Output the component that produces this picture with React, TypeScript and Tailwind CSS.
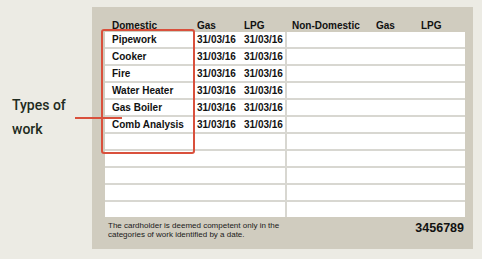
const ROWS = [
  { name: 'Pipework', gas: '31/03/16', lpg: '31/03/16' },
  { name: 'Cooker', gas: '31/03/16', lpg: '31/03/16' },
  { name: 'Fire', gas: '31/03/16', lpg: '31/03/16' },
  { name: 'Water Heater', gas: '31/03/16', lpg: '31/03/16' },
  { name: 'Gas Boiler', gas: '31/03/16', lpg: '31/03/16' },
  { name: 'Comb Analysis', gas: '31/03/16', lpg: '31/03/16' },
]

const TOTAL_ROWS = 11

export default function App() {
  const rows = Array.from({ length: TOTAL_ROWS }, (_, i) => ROWS[i])

  return (
    <div className="relative flex w-[482px] h-[259px] bg-[#ecebe4] font-['Liberation_Sans',Arial,sans-serif] text-[#111]">
      {/* Label */}
      <div className="w-[92px] pl-[12px] pt-[93px] font-['Roboto',sans-serif] font-medium text-[14px] leading-[24px] text-[#1f2b21]">
        <div>Types of</div>
        <div>work</div>
      </div>

      {/* Card */}
      <div className="mt-[7px] w-[381px] h-[242px] bg-[#d0ccbf] pt-[13px] pl-[13px] pr-[8px]">
        {/* Column headers */}
        <div className="flex h-[12px] text-[10px] leading-[12px] font-bold">
          <div className="flex w-[180px] pl-[7px]">
            <span className="w-[85px]">Domestic</span>
            <span className="w-[47px]">Gas</span>
            <span>LPG</span>
          </div>
          <div className="flex ml-[2px] pl-[5px]">
            <span className="w-[84px]">Non-Domestic</span>
            <span className="w-[45px]">Gas</span>
            <span>LPG</span>
          </div>
        </div>

        {/* Table */}
        <div className="flex gap-[2px] bg-[#d8d7d1]">
          <div className="flex flex-col gap-[2px] w-[180px]">
            {rows.map((r, i) => (
              <div key={i} className="flex h-[15px] bg-white pl-[7px] text-[10px] leading-[16px] font-bold">
                {r && (
                  <>
                    <span className="w-[85px]">{r.name}</span>
                    <span className="w-[47px]">{r.gas}</span>
                    <span>{r.lpg}</span>
                  </>
                )}
              </div>
            ))}
          </div>
          <div className="flex flex-col gap-[2px] w-[178px]">
            {rows.map((_, i) => (
              <div key={i} className="h-[15px] bg-white" />
            ))}
          </div>
        </div>

        {/* Footer */}
        <div className="flex justify-between pt-[4px] pl-[3px] pr-[1px]">
          <p className="text-[8px] leading-[9px] text-[#1a1a1a]">
            The cardholder is deemed competent only in the
            <br />
            categories of work identified by a date.
          </p>
          <span className="text-[12.5px] leading-[14px] font-bold">3456789</span>
        </div>
      </div>

      {/* Highlight overlay */}
      <div className="absolute left-[101px] top-[29px] w-[94px] h-[125px] border-2 border-[#d9503c] rounded-[3px]" />
      <div className="absolute left-[75px] top-[117px] w-[47px] h-[2px] bg-[#d9503c]" />
    </div>
  )
}
